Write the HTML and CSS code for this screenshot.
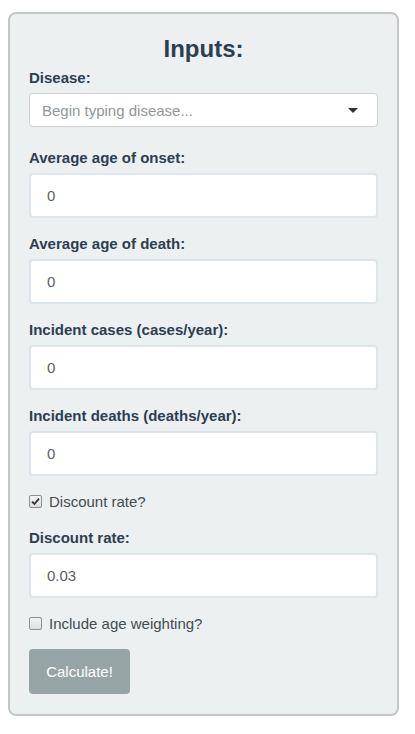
FILE: index.html
```html
<!DOCTYPE html>
<html>
<head>
<meta charset="utf-8">
<link rel="stylesheet" href="styles.css">
</head>
<body>
<div class="card">
  <h2 class="title">Inputs:</h2>
  <div class="group group-select">
    <label class="lbl">Disease:</label>
    <div class="select">
      <span class="placeholder">Begin typing disease...</span>
      <span class="caret"></span>
    </div>
  </div>
  <div class="group">
    <label class="lbl">Average age of onset:</label>
    <div class="input">0</div>
  </div>
  <div class="group">
    <label class="lbl">Average age of death:</label>
    <div class="input">0</div>
  </div>
  <div class="group">
    <label class="lbl">Incident cases (cases/year):</label>
    <div class="input">0</div>
  </div>
  <div class="group">
    <label class="lbl">Incident deaths (deaths/year):</label>
    <div class="input">0</div>
  </div>
  <div class="group">
    <div class="check">
      <span class="box checked"><svg width="9" height="9" viewBox="0 0 9 9"><path d="M1 4.6 L3.4 7 L8 1.6" fill="none" stroke="#333" stroke-width="1.8"/></svg></span>
      <span class="check-text">Discount rate?</span>
    </div>
  </div>
  <div class="group">
    <label class="lbl">Discount rate:</label>
    <div class="input">0.03</div>
  </div>
  <div class="group">
    <div class="check">
      <span class="box"></span>
      <span class="check-text">Include age weighting?</span>
    </div>
  </div>
  <button class="btn">Calculate!</button>
</div>
</body>
</html>
```

FILE: styles.css
```css
html, body {
  margin: 0;
  padding: 0;
  background: #ffffff;
}
body {
  padding: 12px 0 0 8px;
  font-family: "Liberation Sans", Arial, sans-serif;
  font-size: 15px;
  line-height: 1.42857;
  color: #2c3e50;
}
.card {
  box-sizing: border-box;
  width: 391px;
  background: #ecf0f1;
  border: 2px solid #c3c7c8;
  border-radius: 8px;
  padding: 20px 19px 20px 19px;
}
.title {
  margin: 2px 0 5px 0;
  text-align: center;
  font-size: 24px;
  line-height: 1.1;
  font-weight: bold;
  color: #2c3e50;
}
.group {
  margin-bottom: 15px;
}
.group-select {
  margin-bottom: 20px;
}
.lbl {
  display: block;
  font-weight: bold;
  font-size: 15px;
  line-height: 21px;
  margin-bottom: 5px;
  color: #2c3e50;
}
.select {
  box-sizing: border-box;
  height: 34px;
  background: #ffffff;
  border: 1px solid #d0d0d0;
  border-radius: 4px;
  padding: 0 19px 0 12px;
  display: flex;
  align-items: center;
  justify-content: space-between;
}
.placeholder {
  color: #8f9699;
  font-size: 15px;
}
.caret {
  width: 0;
  height: 0;
  border-left: 5px solid transparent;
  border-right: 5px solid transparent;
  border-top: 5px solid #333333;
}
.input {
  box-sizing: border-box;
  height: 45px;
  background: #ffffff;
  border: 2px solid #dce4ec;
  border-radius: 4px;
  padding: 0 15px 0 16px;
  display: flex;
  align-items: center;
  color: #5a5f63;
  font-size: 15px;
}
.check {
  display: flex;
  align-items: center;
  height: 21px;
  margin-top: 10px;
  gap: 7px;
}
.box {
  box-sizing: border-box;
  width: 13px;
  height: 13px;
  border: 1px solid #8e8f8f;
  border-radius: 2px;
  background: linear-gradient(#f4f4f4, #dedede);
  display: flex;
  align-items: center;
  justify-content: center;
}
.check-text {
  color: #444c50;
  font-size: 15px;
}
.btn {
  display: block;
  box-sizing: border-box;
  height: 45px;
  width: 101px;
  padding: 0;
  margin-top: 0;
  background: #95a5a6;
  border: none;
  border-radius: 4px;
  color: #ffffff;
  font-family: "Liberation Sans", Arial, sans-serif;
  font-size: 15px;
}
```
